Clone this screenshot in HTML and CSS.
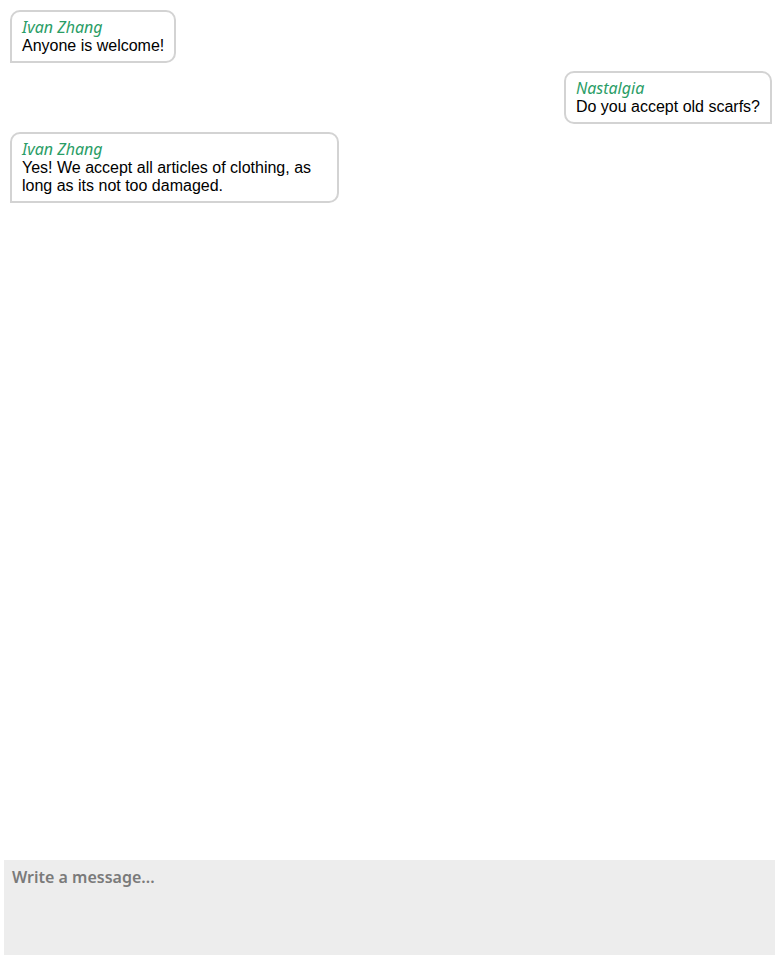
FILE: index.html
```html
<!DOCTYPE html>
<html lang="en">
<head>
    <meta charset="UTF-8">
    <meta name="viewport" content="width=device-width, initial-scale=1.0">
    <title>Chat</title>
    <link rel="stylesheet" href="styles.css">
</head>
<body>

    <div class="chat">
        <div class="messages">
            <div class="message theirs">
                <div class="author">Ivan Zhang</div>
                <div class="text">Anyone is welcome!</div>
            </div>
            <div class="message mine">
                <div class="author">Nastalgia</div>
                <div class="text">Do you accept old scarfs?</div>
            </div>
            <div class="message theirs">
                <div class="author">Ivan Zhang</div>
                <div class="text">Yes! We accept all articles of clothing, as long as its not too damaged.</div>
            </div>
        </div>

        <textarea class="compose" placeholder="Write a message..."></textarea>
    </div>

</body>
</html>
```

FILE: styles.css
```css
html, body {
    margin: 0;
    padding: 0;
    height: 100%;
    background: #fff;
}
.chat {
    display: flex;
    flex-direction: column;
    height: 963px;
}
.messages {
    flex: 1;
    display: flex;
    flex-direction: column;
    align-items: flex-start;
    gap: 8px;
    padding: 10px 8px 0 10px;
}
.message {
    max-width: 305px;
    padding: 6px 10px;
    border: 2px solid #d3d3d3;
    border-radius: 10px;
    font-family: 'Liberation Sans', Arial, sans-serif;
    font-size: 16px;
    line-height: 18px;
    color: #000;
}
.message.theirs {
    border-bottom-left-radius: 0;
}
.message.mine {
    align-self: flex-end;
    border-bottom-right-radius: 0;
}
.author {
    font-family: 'Noto Sans', 'Open Sans', sans-serif;
    font-style: italic;
    font-size: 16px;
    line-height: 19px;
    color: #2a9d66;
}
.compose {
    display: block;
    box-sizing: border-box;
    width: 771px;
    height: 95px;
    margin: 0 5px 8px 4px;
    padding: 6px 8px;
    border: none;
    outline: none;
    resize: none;
    background: #ededed;
    font-family: 'Noto Sans', 'Open Sans', sans-serif;
    font-weight: 600;
    font-size: 16px;
}
.compose::placeholder {
    color: #7a7a7a;
}
```
